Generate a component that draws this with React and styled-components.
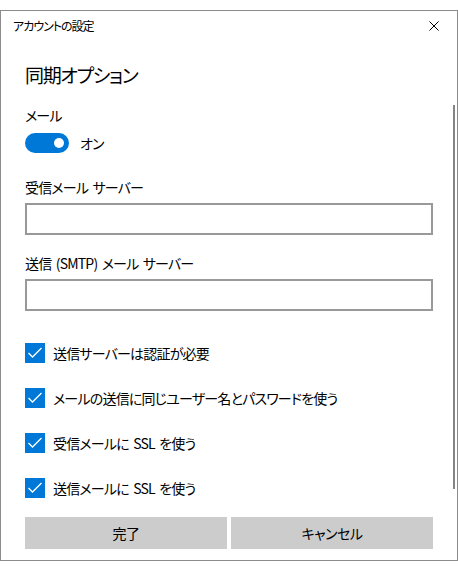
import React from "react";
import styled, { createGlobalStyle } from "styled-components";

const Global = createGlobalStyle`
  html, body { margin: 0; padding: 0; background: #fff; }
  body {
    font-family: "Noto Sans CJK JP", "Noto Sans", sans-serif;
    color: #000;
    font-feature-settings: "palt";
  }
`;

const Page = styled.div`
  padding-top: 10px;
  width: 458px;
`;

const Window = styled.div`
  position: relative;
  box-sizing: border-box;
  width: 458px;
  height: 551px;
  border: 1px solid #8c8c8c;
  background: #fff;
  display: flex;
  flex-direction: column;
`;

const TitleBar = styled.div`
  height: 30px;
  display: flex;
  align-items: center;
  justify-content: space-between;
  padding: 0 18px 0 12px;
`;

const Title = styled.span`
  font-size: 12px;
  line-height: 30px;
  letter-spacing: -1px;
`;

const Close = styled.svg`
  width: 10px;
  height: 10px;
  display: block;
`;

const Content = styled.div`
  display: flex;
  flex-direction: column;
  padding: 0 24px;
  width: 408px;
`;

const Heading = styled.h1`
  margin: 20px 0 0;
  font-size: 19px;
  font-weight: 400;
  line-height: 28px;
  height: 28px;
  letter-spacing: -1.3px;
`;

const Label = styled.div`
  font-size: 14px;
  line-height: 20px;
  height: 20px;
  letter-spacing: -0.8px;
  word-spacing: 2px;
  margin-top: ${(p) => p.$top}px;
`;

const ToggleRow = styled.div`
  display: flex;
  align-items: center;
  gap: 11px;
  margin-top: 8px;
  height: 20px;
`;

const Track = styled.div`
  position: relative;
  width: 44px;
  height: 20px;
  border-radius: 10px;
  background: #0078d7;
`;

const Knob = styled.div`
  position: absolute;
  right: 5px;
  top: 5px;
  width: 10px;
  height: 10px;
  border-radius: 50%;
  background: #fff;
`;

const ToggleText = styled.span`
  font-size: 14px;
  line-height: 20px;
  letter-spacing: -0.8px;
`;

const Input = styled.div`
  box-sizing: border-box;
  width: 408px;
  height: 32px;
  border: 2px solid #999;
  margin-top: 6px;
`;

const Checks = styled.div`
  display: flex;
  flex-direction: column;
  gap: 25px;
  margin-top: 32px;
`;

const CheckRow = styled.div`
  display: flex;
  align-items: center;
  gap: 8px;
  height: 20px;
  font-size: 14px;
  line-height: 20px;
  letter-spacing: -0.8px;
  word-spacing: 2px;
`;

const Box = styled.div`
  width: 20px;
  height: 20px;
  background: #0078d7;
  display: flex;
  align-items: center;
  justify-content: center;
`;

const Buttons = styled.div`
  display: grid;
  grid-template-columns: 1fr 1fr;
  gap: 4px;
  margin-top: 19px;
`;

const Button = styled.div`
  height: 32px;
  background: #cccccc;
  display: flex;
  align-items: center;
  justify-content: center;
  font-size: 14px;
  letter-spacing: -0.5px;
`;

const Scroll = styled.div`
  position: absolute;
  left: 452px;
  top: 94px;
  width: 2px;
  height: 384px;
  background: #858585;
`;

const Check = () => (
  <Box>
    <svg width="16" height="12" viewBox="0 0 16 12">
      <polyline points="1.5,6 5.5,10 14.5,1" fill="none" stroke="#fff" strokeWidth="1.3" />
    </svg>
  </Box>
);

const checks = [
  "送信サーバーは認証が必要",
  "メールの送信に同じユーザー名とパスワードを使う",
  "受信メールに SSL を使う",
  "送信メールに SSL を使う",
];

export default function App() {
  return (
    <Page>
      <Global />
      <Window>
        <TitleBar>
          <Title>アカウントの設定</Title>
          <Close viewBox="0 0 10 10">
            <path d="M0.5 0.5 L9.5 9.5 M9.5 0.5 L0.5 9.5" stroke="#000" strokeWidth="1" />
          </Close>
        </TitleBar>
        <Content>
          <Heading>同期オプション</Heading>
          <Label $top={16}>メール</Label>
          <ToggleRow>
            <Track>
              <Knob />
            </Track>
            <ToggleText>オン</ToggleText>
          </ToggleRow>
          <Label $top={24}>受信メール サーバー</Label>
          <Input />
          <Label $top={18}>送信 (SMTP) メール サーバー</Label>
          <Input />
          <Checks>
            {checks.map((c) => (
              <CheckRow key={c}>
                <Check />
                <span>{c}</span>
              </CheckRow>
            ))}
          </Checks>
          <Buttons>
            <Button>完了</Button>
            <Button>キャンセル</Button>
          </Buttons>
        </Content>
        <Scroll />
      </Window>
    </Page>
  );
}
